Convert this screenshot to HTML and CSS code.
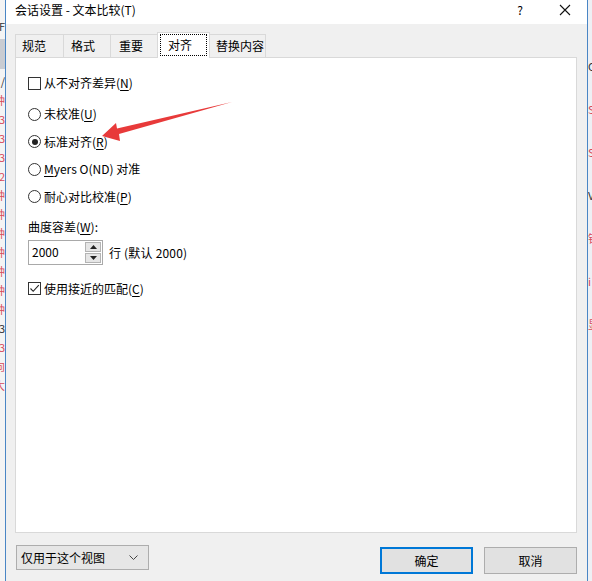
FILE: index.html
```html
<!DOCTYPE html>
<html lang="zh-CN">
<head>
<meta charset="utf-8">
<title>会话设置 - 文本比较</title>
<link rel="stylesheet" href="styles.css">
</head>
<body>
<div class="screen">
  <div class="behind behind-left">
    <span class="mark dark">F</span>
    <span class="band"></span>
    <span class="mark dark">/</span>
    <span class="mark red">钟</span>
    <span class="mark red">3</span>
    <span class="mark red">3</span>
    <span class="mark red">3</span>
    <span class="mark red">2</span>
    <span class="mark red">钟</span>
    <span class="mark red">钟</span>
    <span class="mark red">钟</span>
    <span class="mark red">钟</span>
    <span class="mark red">钟</span>
    <span class="mark red">钟</span>
    <span class="mark red">钟</span>
    <span class="mark dark">3</span>
    <span class="mark red">3</span>
    <span class="mark red">向</span>
    <span class="mark red">大</span>
  </div>

  <div class="dialog">
    <div class="titlebar">
      <span class="title">会话设置 - 文本比较(T)</span>
      <span class="help">?</span>
      <span class="close">
        <svg width="12" height="12" viewBox="0 0 12 12"><path d="M1 1 L11 11 M11 1 L1 11" stroke="#111" stroke-width="1.1" fill="none"/></svg>
      </span>
    </div>

    <div class="dialog-body">
      <div class="tabs">
        <div class="tab tab-w1">规范</div>
        <div class="tab tab-w2">格式</div>
        <div class="tab tab-w3">重要</div>
        <div class="tab tab-active"><span class="focus">对齐</span></div>
        <div class="tab tab-w5">替换内容</div>
      </div>

      <div class="panel">
        <label class="opt opt-first"><span class="checkbox"></span><span>从不对齐差异(<u>N</u>)</span></label>

        <div class="radio-group">
          <label class="opt"><span class="radio"></span><span>未校准(<u>U</u>)</span></label>
          <label class="opt"><span class="radio checked"></span><span>标准对齐(<u>R</u>)</span></label>
          <label class="opt"><span class="radio"></span><span><u>M</u>yers O(ND) 对准</span></label>
          <label class="opt"><span class="radio"></span><span>耐心对比校准(<u>P</u>)</span></label>
        </div>

        <div class="field-label">曲度容差(<u>W</u>):</div>
        <div class="spin-row">
          <div class="spinner">
            <span class="spin-value">2000</span>
            <span class="spin-buttons">
              <span class="spin-btn"><svg width="7" height="4" viewBox="0 0 7 4"><path d="M0 4 L3.5 0 L7 4 Z" fill="#222"/></svg></span>
              <span class="spin-btn"><svg width="7" height="4" viewBox="0 0 7 4"><path d="M0 0 L7 0 L3.5 4 Z" fill="#222"/></svg></span>
            </span>
          </div>
          <span class="spin-note">行 (默认 2000)</span>
        </div>

        <label class="opt opt-last"><span class="checkbox">
          <svg width="11" height="11" viewBox="0 0 11 11"><path d="M1.5 5.5 L4.2 8.3 L9.8 2.2" stroke="#222" stroke-width="1.1" fill="none"/></svg>
        </span><span>使用接近的匹配(<u>C</u>)</span></label>
      </div>

      <div class="footer">
        <div class="dropdown">
          <span>仅用于这个视图</span>
          <svg width="9" height="5" viewBox="0 0 9 5"><path d="M0.5 0.5 L4.5 4.5 L8.5 0.5" stroke="#444" stroke-width="1" fill="none"/></svg>
        </div>
        <div class="actions">
          <button class="btn btn-default">确定</button>
          <button class="btn">取消</button>
        </div>
      </div>
    </div>
  </div>

  <div class="behind behind-right">
    <span class="mark dark">C</span>
    <span class="mark red">S</span>
    <span class="mark red">S</span>
    <span class="mark dark">V</span>
    <span class="mark red">钟</span>
    <span class="mark red">i</span>
    <span class="mark red">显</span>
  </div>

  <svg class="annotation" width="592" height="581" viewBox="0 0 592 581">
    <polygon points="102,136 116,123 117,128.5 232,102 119,134 120,141" fill="#e83a3a"/>
  </svg>
</div>
</body>
</html>
```

FILE: styles.css
```css
* {
  box-sizing: border-box;
}

html, body {
  margin: 0;
  padding: 0;
  background: #ffffff;
}

body {
  font-family: "Noto Sans CJK SC", "Noto Sans", sans-serif;
  font-size: 12px;
  color: #000;
}

u {
  text-decoration: underline;
  text-underline-offset: 2px;
}

.screen {
  position: relative;
  width: 592px;
  height: 581px;
  display: flex;
  overflow: hidden;
}

/* window peeking out behind the dialog */
.behind {
  display: flex;
  flex-direction: column;
  overflow: hidden;
  background: #f4f4f4;
  height: 581px;
}

.behind-left {
  width: 6px;
  border-right: 1px solid #4a86c5;
  align-items: flex-end;
  padding-top: 20px;
  gap: 6px;
}

.behind-right {
  width: 5px;
  border-left: 1px solid #4a86c5;
  padding-top: 60px;
  gap: 30px;
  background: #eef0f4;
}

.mark {
  font-size: 11px;
  line-height: 13px;
  white-space: nowrap;
}

.mark.red {
  color: #d84a5a;
}

.mark.dark {
  color: #333;
}

.band {
  width: 100%;
  height: 30px;
  background: #c9ccd2;
  flex: none;
}

/* dialog window */
.dialog {
  width: 581px;
  height: 581px;
  display: flex;
  flex-direction: column;
  background: #f0f0f0;
}

.titlebar {
  height: 24px;
  background: #ffffff;
  display: flex;
  align-items: flex-start;
  padding-left: 9px;
  flex: none;
}

.title {
  line-height: 20px;
  font-size: 12px;
  color: #000;
}

.help {
  margin-left: auto;
  width: 46px;
  text-align: center;
  line-height: 19px;
  font-size: 12px;
}

.close {
  width: 44px;
  height: 19px;
  display: flex;
  align-items: center;
  justify-content: center;
}

.dialog-body {
  padding: 8px 10px 0 9px;
  display: flex;
  flex-direction: column;
}

/* tab strip */
.tabs {
  display: flex;
  align-items: flex-end;
  height: 25px;
}

.tab {
  height: 23px;
  border: 1px solid #d9d9d9;
  border-bottom: none;
  background: #f0f0f0;
  padding-left: 6px;
  line-height: 21px;
  margin-left: -1px;
}

.tab:first-child {
  margin-left: 0;
}

.tab-w1 { width: 49px; }
.tab-w2 { width: 48px; padding-left: 7px; }
.tab-w3 { width: 48px; padding-left: 8px; }
.tab-w5 { width: 57px; }

.tab-active {
  position: relative;
  z-index: 1;
  width: 53px;
  height: 26px;
  margin-bottom: -1px;
  background: #ffffff;
  padding: 1px 2px 2px 2px;
  line-height: 20px;
}

.focus {
  display: block;
  height: 22px;
  border: 1px dotted #000;
  padding-left: 7px;
  line-height: 20px;
}

/* page content */
.panel {
  height: 476px;
  background: #ffffff;
  border: 1px solid #d9d9d9;
  padding: 17px 0 0 12px;
  display: flex;
  flex-direction: column;
  align-items: flex-start;
}

.opt {
  display: flex;
  align-items: center;
  height: 16px;
  gap: 3px;
  line-height: 16px;
  white-space: nowrap;
}

.checkbox {
  width: 13px;
  height: 13px;
  border: 1px solid #333;
  background: #fff;
  display: flex;
  align-items: center;
  justify-content: center;
  flex: none;
}

.radio {
  width: 13px;
  height: 13px;
  border: 1px solid #333;
  border-radius: 50%;
  background: #fff;
  flex: none;
  display: flex;
  align-items: center;
  justify-content: center;
}

.radio.checked::after {
  content: "";
  width: 6px;
  height: 6px;
  border-radius: 50%;
  background: #222;
}

.radio-group {
  margin-top: 15px;
  display: flex;
  flex-direction: column;
  gap: 11.5px;
}

.field-label {
  margin-top: 14px;
  line-height: 16px;
  height: 16px;
}

.spin-row {
  margin-top: 5px;
  display: flex;
  align-items: center;
  gap: 6px;
}

.spinner {
  width: 75px;
  height: 25px;
  border: 1px solid #a9a9a9;
  background: #fff;
  display: flex;
  align-items: center;
  padding: 1px 1px 1px 3px;
}

.spin-value {
  flex: 1;
  line-height: 18px;
}

.spin-buttons {
  width: 16px;
  height: 21px;
  display: flex;
  flex-direction: column;
  gap: 1px;
}

.spin-btn {
  flex: 1;
  background: #e6e6e6;
  border: 1px solid #b4b4b4;
  display: flex;
  align-items: center;
  justify-content: center;
}

.spin-note {
  line-height: 16px;
  padding-top: 2px;
  letter-spacing: 0.2px;
}

.opt-last {
  margin-top: 16px;
}

/* bottom row */
.footer {
  margin-top: 12px;
  display: flex;
  align-items: flex-start;
  padding-left: 1px;
}

.dropdown {
  width: 133px;
  height: 25px;
  border: 1px solid #adadad;
  background: #e6e6e6;
  display: flex;
  align-items: center;
  justify-content: space-between;
  padding: 0 10px 0 4px;
}

.actions {
  margin-left: auto;
  margin-top: 2px;
  display: flex;
  gap: 11px;
}

.btn {
  width: 93px;
  height: 27px;
  border: 1px solid #adadad;
  background: #e1e1e1;
  font-family: inherit;
  font-size: 12px;
  color: #000;
  padding: 0;
  margin: 0;
}

.btn-default {
  border: 2px solid #0078d7;
}

/* red callout arrow laid over the form */
.annotation {
  position: absolute;
  left: 0;
  top: 0;
  pointer-events: none;
}
```
